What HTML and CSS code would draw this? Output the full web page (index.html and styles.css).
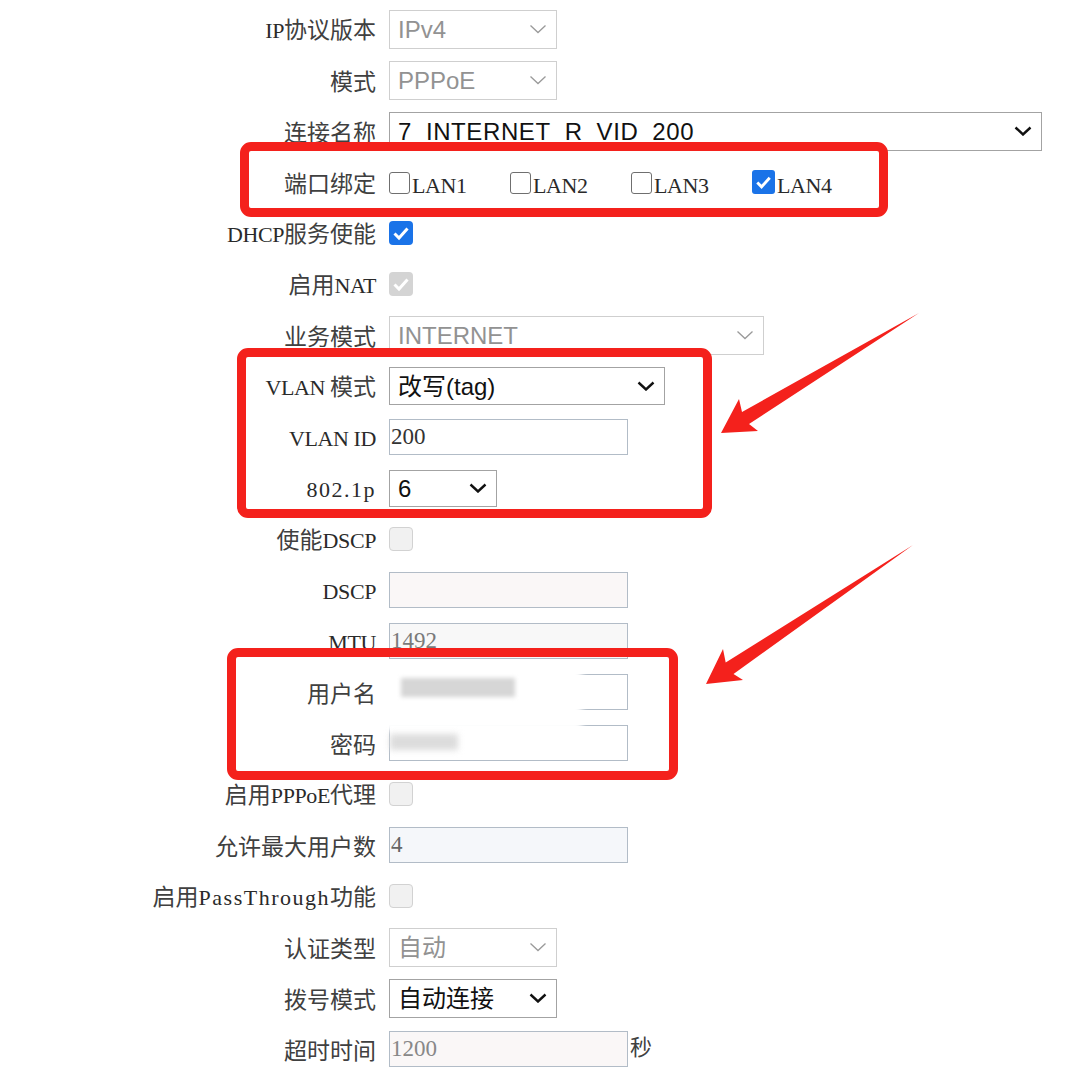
FILE: index.html
```html
<!DOCTYPE html>
<html lang="zh-CN">
<head>
  <meta charset="UTF-8">
  <title>WAN 连接配置</title>
  <meta name="viewport" content="width=device-width, initial-scale=1.0">
  <link rel="stylesheet" href="styles.css">
</head>
<body>
<div class="page">

  <form class="wan-form">

    <div class="row">
      <label class="lbl"><span class="en">IP</span>协议版本</label>
      <div class="sel">
        <select class="off w-short" disabled><option>IPv4</option></select>
        <svg viewBox="0 0 18 10"><path d="M1.5 1.5 L9 8.5 L16.5 1.5" class="chev-off"/></svg>
      </div>
    </div>

    <div class="row">
      <label class="lbl">模式</label>
      <div class="sel">
        <select class="off w-short" disabled><option>PPPoE</option></select>
        <svg viewBox="0 0 18 10"><path d="M1.5 1.5 L9 8.5 L16.5 1.5" class="chev-off"/></svg>
      </div>
    </div>

    <div class="row">
      <label class="lbl">连接名称</label>
      <div class="sel">
        <select class="w-wide"><option>7_INTERNET_R_VID_200</option></select>
        <svg viewBox="0 0 18 10"><path d="M1.5 1.5 L9 8.5 L16.5 1.5" class="chev"/></svg>
      </div>
    </div>

    <div class="row">
      <label class="lbl">端口绑定</label>
      <div class="lans">
        <span class="lan"><span class="cb cb-lan"></span><span class="en lan-txt">LAN1</span></span>
        <span class="lan"><span class="cb cb-lan"></span><span class="en lan-txt">LAN2</span></span>
        <span class="lan"><span class="cb cb-lan"></span><span class="en lan-txt">LAN3</span></span>
        <span class="lan"><span class="cb cb-lan cb-on"><svg viewBox="0 0 24 24"><path d="M5.5 12.5 L10 17 L18.5 7.5"/></svg></span><span class="en lan-txt">LAN4</span></span>
      </div>
    </div>

    <div class="row">
      <label class="lbl"><span class="en">DHCP</span>服务使能</label>
      <span class="cb cb-on"><svg viewBox="0 0 24 24"><path d="M5.5 12.5 L10 17 L18.5 7.5"/></svg></span>
    </div>

    <div class="row">
      <label class="lbl">启用<span class="en">NAT</span></label>
      <span class="cb cb-grey"><svg viewBox="0 0 24 24"><path d="M5.5 12.5 L10 17 L18.5 7.5"/></svg></span>
    </div>

    <div class="row">
      <label class="lbl">业务模式</label>
      <div class="sel">
        <select class="off w-mid" disabled><option>INTERNET</option></select>
        <svg viewBox="0 0 18 10"><path d="M1.5 1.5 L9 8.5 L16.5 1.5" class="chev-off"/></svg>
      </div>
    </div>

    <div class="row">
      <label class="lbl"><span class="en">VLAN </span>模式</label>
      <div class="sel">
        <select class="w-vlan"><option>改写(tag)</option></select>
        <svg viewBox="0 0 18 10"><path d="M1.5 1.5 L9 8.5 L16.5 1.5" class="chev"/></svg>
      </div>
    </div>

    <div class="row">
      <label class="lbl"><span class="en">VLAN ID</span></label>
      <input type="text" class="txt" value="200">
    </div>

    <div class="row">
      <label class="lbl"><span class="en en-loose">802.1p</span></label>
      <div class="sel">
        <select class="w-prio"><option>6</option></select>
        <svg viewBox="0 0 18 10"><path d="M1.5 1.5 L9 8.5 L16.5 1.5" class="chev"/></svg>
      </div>
    </div>

    <div class="row">
      <label class="lbl">使能<span class="en">DSCP</span></label>
      <span class="cb cb-off"></span>
    </div>

    <div class="row">
      <label class="lbl"><span class="en">DSCP</span></label>
      <input type="text" class="txt txt-off" value="" disabled>
    </div>

    <div class="row">
      <label class="lbl"><span class="en">MTU</span></label>
      <input type="text" class="txt txt-grey" value="1492">
    </div>

    <div class="row">
      <label class="lbl">用户名</label>
      <input type="text" class="txt" value="">
    </div>

    <div class="row">
      <label class="lbl">密码</label>
      <input type="password" class="txt" value="">
    </div>

    <div class="row">
      <label class="lbl">启用<span class="en">PPPoE</span>代理</label>
      <span class="cb cb-off"></span>
    </div>

    <div class="row">
      <label class="lbl">允许最大用户数</label>
      <input type="text" class="txt txt-blue" value="4">
    </div>

    <div class="row">
      <label class="lbl">启用<span class="en en-loose">PassThrough</span>功能</label>
      <span class="cb cb-off"></span>
    </div>

    <div class="row">
      <label class="lbl">认证类型</label>
      <div class="sel">
        <select class="off w-short" disabled><option>自动</option></select>
        <svg viewBox="0 0 18 10"><path d="M1.5 1.5 L9 8.5 L16.5 1.5" class="chev-off"/></svg>
      </div>
    </div>

    <div class="row">
      <label class="lbl">拨号模式</label>
      <div class="sel">
        <select class="w-short"><option>自动连接</option></select>
        <svg viewBox="0 0 18 10"><path d="M1.5 1.5 L9 8.5 L16.5 1.5" class="chev"/></svg>
      </div>
    </div>

    <div class="row">
      <label class="lbl">超时时间</label>
      <div class="with-unit">
        <input type="text" class="txt txt-off txt-grey" value="1200">
        <span class="unit">秒</span>
      </div>
    </div>

  </form>

  <!-- 打码 -->
  <div class="blur blur-cloud"></div>
  <div class="blur blur-user"></div>
  <div class="blur blur-pass"></div>

  <!-- 标注 -->
  <div class="mark mark-lan"></div>
  <div class="mark mark-vlan"></div>
  <div class="mark mark-acct"></div>

  <svg class="arrows" viewBox="0 0 1071 1086">
    <polygon points="919,313 749,424 758,431 721,433 739,399 742,412"/>
    <polygon points="913,545 733.5,674 743,680 706,684 723,649 725.7,662.5"/>
  </svg>

</div>
</body>
</html>
```

FILE: styles.css
```css
body {
  margin: 0;
  background: #fff;
  font-family: "Noto Sans CJK SC", sans-serif;
}

.page {
  position: relative;
  width: 1071px;
  height: 1086px;
  overflow: hidden;
}

.wan-form {
  padding-top: 3.5px;
}

.row {
  display: flex;
  align-items: center;
  gap: 13px;
  height: 51px;
}

.lbl {
  flex: none;
  width: 376px;
  text-align: right;
  white-space: nowrap;
  font-size: 23px;
  line-height: 1;
  color: #404040;
}

.en {
  font-family: "Liberation Serif", serif;
  font-size: 22px;
  letter-spacing: -0.4px;
  color: #2a2a2a;
}

.en-loose {
  letter-spacing: 1.5px;
}

/* 下拉框 */
.sel {
  position: relative;
  flex: none;
}

.sel select {
  -webkit-appearance: none;
  appearance: none;
  display: block;
  box-sizing: border-box;
  height: 39px;
  margin: 0;
  padding: 0 34px 0 8px;
  border: 1px solid #a3a3a3;
  border-radius: 0;
  background: #fff;
  font: 24px "Liberation Sans", "Noto Sans CJK SC", sans-serif;
  color: #111;
  opacity: 1;
}

.sel select.off {
  border-color: #cfcfcf;
  color: #929292;
}

.sel svg {
  position: absolute;
  right: 10px;
  top: 50%;
  width: 18px;
  height: 10px;
  margin-top: -5px;
  pointer-events: none;
}

.chev {
  fill: none;
  stroke: #111;
  stroke-width: 2.4;
}

.chev-off {
  fill: none;
  stroke: #9a9a9a;
  stroke-width: 1.3;
}

.w-short { width: 168px; }
.w-wide { width: 653px; letter-spacing: 0.6px; }
.w-mid { width: 375px; }
.w-vlan { width: 276px; height: 38px !important; }
.w-prio { width: 108px; height: 37px !important; }

/* 输入框 */
.txt {
  box-sizing: border-box;
  width: 239px;
  height: 36px;
  margin: 0;
  padding: 0 1px;
  border: 1px solid #b2bcc7;
  background: #fff;
  font-family: "Liberation Serif", serif;
  font-size: 23px;
  color: #333;
}

.txt-off {
  background: #faf7f7;
}

.txt-grey {
  color: #7a7a7a;
  background: #f8f8f8;
}

.txt-off.txt-grey {
  background: #faf7f7;
  color: #888;
}

.txt-blue {
  background: #f5f7fa;
  color: #666;
}

.with-unit {
  display: flex;
  align-items: flex-start;
  gap: 2px;
}

.unit {
  font-size: 22px;
  line-height: 1;
  margin-top: 3px;
  color: #404040;
}

/* 复选框 */
.cb {
  flex: none;
  box-sizing: border-box;
  display: block;
  width: 24px;
  height: 24px;
  border-radius: 4px;
}

.cb svg {
  display: block;
  width: 24px;
  height: 24px;
}

.cb svg path {
  fill: none;
  stroke: #fff;
  stroke-width: 3;
}

.cb-on {
  background: #1a73e8;
}

.cb-grey {
  background: #d4d4d4;
}

.cb-off {
  background: #f1f1f1;
  border: 1px solid #d2d2d2;
}

.lans {
  display: flex;
}

.lan {
  display: flex;
  align-items: flex-end;
  width: 121px;
}

.cb-lan {
  width: 21px;
  height: 22px;
  border: 1.5px solid #6f6f6f;
  border-radius: 3px;
  background: #fff;
}

.cb-lan.cb-on {
  width: 23px;
  height: 24px;
  border: none;
  background: #1a73e8;
}

.cb-lan.cb-on svg {
  width: 23px;
  height: 24px;
}

.lan-txt {
  line-height: 16px;
  margin-left: 2px;
}

/* 打码区域 */
.blur {
  position: absolute;
}

.blur-cloud {
  left: 382px;
  top: 667px;
  width: 200px;
  height: 64px;
  background: #fff;
  filter: blur(3px);
}

.blur-user {
  left: 401px;
  top: 678px;
  width: 114px;
  height: 19px;
  background: #d6d6d6;
  filter: blur(2px);
}

.blur-pass {
  left: 390px;
  top: 734px;
  width: 68px;
  height: 16px;
  background: #dcdcdc;
  filter: blur(3px);
}

/* 红框标注 */
.mark {
  position: absolute;
  box-sizing: border-box;
  border: 9px solid #f4211c;
  border-radius: 11px;
}

.mark-lan {
  left: 240px;
  top: 142px;
  width: 648px;
  height: 75px;
}

.mark-vlan {
  left: 237px;
  top: 348px;
  width: 475px;
  height: 170px;
}

.mark-acct {
  left: 227px;
  top: 648px;
  width: 451px;
  height: 132px;
}

.arrows {
  position: absolute;
  left: 0;
  top: 0;
  width: 1071px;
  height: 1086px;
  pointer-events: none;
}

.arrows polygon {
  fill: #f4211c;
}
```
